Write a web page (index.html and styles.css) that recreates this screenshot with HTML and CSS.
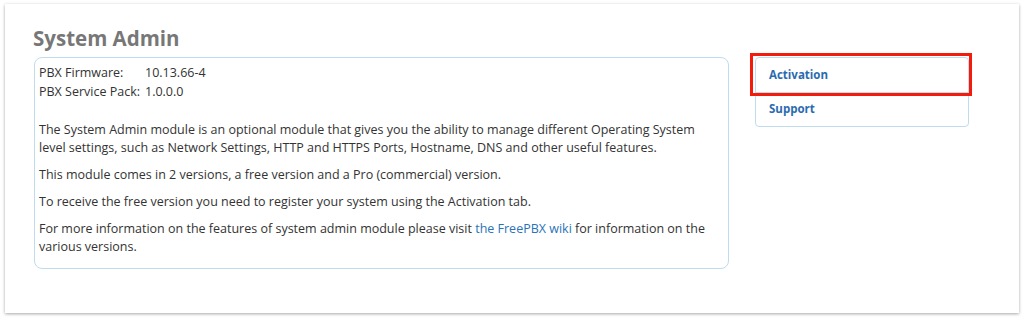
FILE: index.html
```html
<!DOCTYPE html>
<html>
<head>
<meta charset="utf-8">
<link rel="stylesheet" href="styles.css">
</head>
<body>
<div class="card">
  <h1 class="title">System Admin</h1>
  <div class="layout">
    <div class="info">
      <div class="meta">
        <div class="meta-row"><span class="meta-label fw">PBX Firmware:</span><span>10.13.66-4</span></div>
        <div class="meta-row"><span class="meta-label">PBX Service Pack:</span><span>1.0.0.0</span></div>
      </div>
      <p class="para">The System Admin module is an optional module that gives you the ability to manage different Operating System level settings, such as Network Settings, HTTP and HTTPS Ports, Hostname, DNS and other useful features.</p>
      <p class="para">This module comes in 2 versions, a free version and a Pro (commercial) version.</p>
      <p class="para">To receive the free version you need to register your system using the Activation tab.</p>
      <p class="para">For more information on the features of system admin module please visit <a class="link" href="#">the FreePBX wiki</a> for information on the various versions.</p>
    </div>
    <div class="nav">
      <div class="nav-item highlighted">Activation</div>
      <div class="nav-item">Support</div>
    </div>
  </div>
</div>
</body>
</html>
```
FILE: styles.css
```css
html, body {
  margin: 0;
  padding: 0;
  background: #ffffff;
}
body {
  padding: 4px 5px 6px 5px;
  font-family: "Open Sans", "Liberation Sans", sans-serif;
  color: #333;
}
.card {
  background: #fff;
  box-shadow: 0 1px 3px rgba(0,0,0,0.35);
  height: 309px;
  box-sizing: border-box;
  padding: 22px 26px 0 28px;
}
.title {
  margin: 0;
  font-size: 20.5px;
  font-weight: 700;
  color: #777;
  line-height: 24px;
}
.layout {
  display: flex;
  margin-top: 7px;
  align-items: flex-start;
}
.info {
  margin-left: 1px;
  width: 695px;
  box-sizing: border-box;
  height: 212px;
  border: 1px solid #bfdcef;
  border-radius: 8px;
  padding: 5px 8px 0 4px;
  font-size: 12.5px;
  line-height: 18px;
}
.meta-row {
  display: flex;
  line-height: 19px;
}
.meta-label {
  width: 106px;
}
.meta {
  margin-bottom: 20px;
}
.para {
  margin: 0 0 9px 0;
}
.link {
  color: #2a73b8;
  text-decoration: none;
}
.nav {
  margin-left: 26px;
  width: 212px;
  border: 1px solid #bfdcef;
  border-radius: 4px;
  position: relative;
}
.nav-item {
  height: 34px;
  line-height: 34px;
  padding-left: 13px;
  font-size: 11.5px;
  font-weight: 700;
  color: #2a6bb0;
}
.nav-item + .nav-item {
  border-top: 1px solid #bfdcef;
  height: 33px;
  line-height: 32px;
}
.highlighted {
  position: relative;
}
.highlighted::after {
  content: "";
  position: absolute;
  left: -6px;
  top: -5px;
  right: -4px;
  bottom: -4px;
  border: 3px solid #f51b0b;
}
```
